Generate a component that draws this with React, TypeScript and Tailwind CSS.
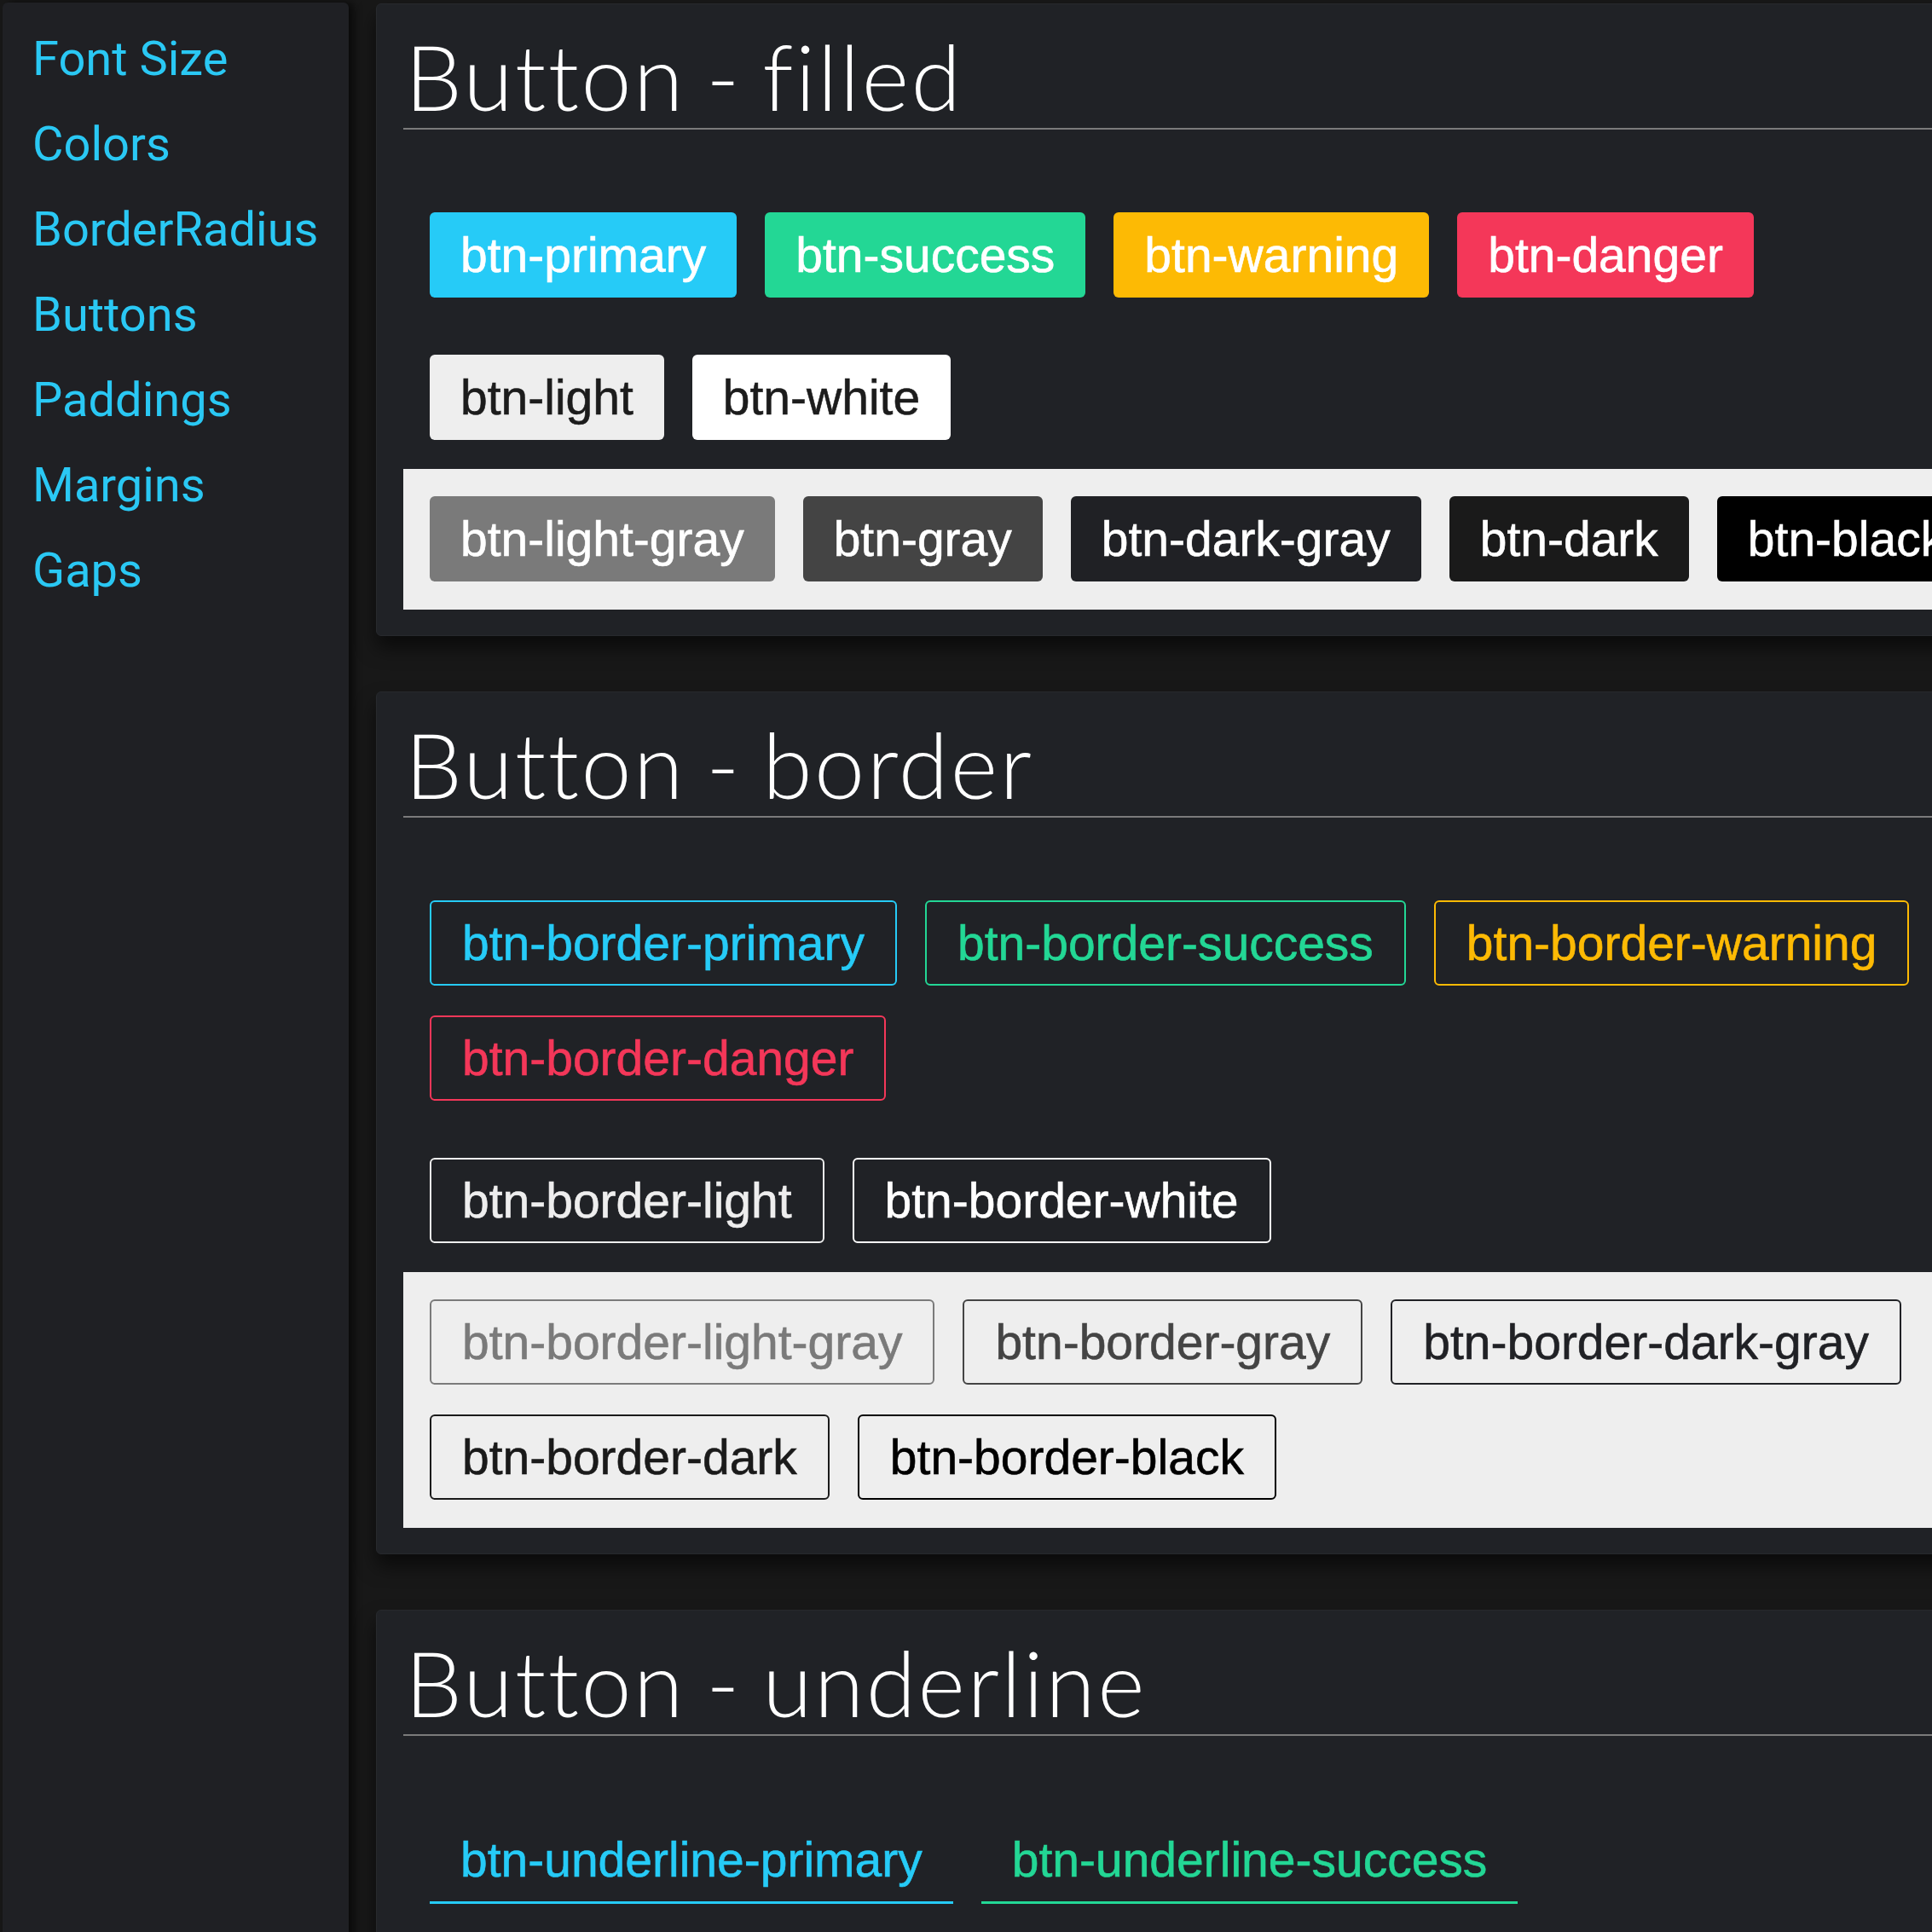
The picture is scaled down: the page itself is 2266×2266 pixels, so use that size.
import React from 'react';

type Btn = { label: string; cls: string };

const navItems = ['Font Size', 'Colors', 'BorderRadius', 'Buttons', 'Paddings', 'Margins', 'Gaps'];

// filled
const filledColors: Btn[] = [
  { label: 'btn-primary', cls: 'bg-[#26cbf7] text-white' },
  { label: 'btn-success', cls: 'bg-[#23d795] text-white' },
  { label: 'btn-warning', cls: 'bg-[#fdba04] text-white' },
  { label: 'btn-danger', cls: 'bg-[#f43759] text-white' },
];
const filledLight: Btn[] = [
  { label: 'btn-light', cls: 'bg-[#eeeeee] text-[#1c1c1c]' },
  { label: 'btn-white', cls: 'bg-white text-[#1c1c1c]' },
];
const filledDark: Btn[] = [
  { label: 'btn-light-gray', cls: 'bg-[#7a7a7a] text-white' },
  { label: 'btn-gray', cls: 'bg-[#444444] text-white' },
  { label: 'btn-dark-gray', cls: 'bg-[#202125] text-white' },
  { label: 'btn-dark', cls: 'bg-[#1a1a1a] text-white' },
  { label: 'btn-black', cls: 'bg-black text-white' },
];

// border
const borderColors: Btn[] = [
  { label: 'btn-border-primary', cls: 'border-[#26cbf7] text-[#26cbf7]' },
  { label: 'btn-border-success', cls: 'border-[#23d795] text-[#23d795]' },
  { label: 'btn-border-warning', cls: 'border-[#fdba04] text-[#fdba04]' },
  { label: 'btn-border-danger', cls: 'border-[#f43759] text-[#f43759]' },
];
const borderLight: Btn[] = [
  { label: 'btn-border-light', cls: 'border-[#eeeeee] text-[#eeeeee]' },
  { label: 'btn-border-white', cls: 'border-white text-white' },
];
const borderDark: Btn[] = [
  { label: 'btn-border-light-gray', cls: 'border-[#7a7a7a] text-[#7a7a7a]' },
  { label: 'btn-border-gray', cls: 'border-[#444444] text-[#444444]' },
  { label: 'btn-border-dark-gray', cls: 'border-[#202125] text-[#202125]' },
  { label: 'btn-border-dark', cls: 'border-[#1a1a1a] text-[#1a1a1a]' },
  { label: 'btn-border-black', cls: 'border-black text-black' },
];

// underline
const underlineColors: Btn[] = [
  { label: 'btn-underline-primary', cls: 'border-[#26cbf7] text-[#26cbf7]' },
  { label: 'btn-underline-success', cls: 'border-[#23d795] text-[#23d795]' },
];

const btnBase =
  "h-[100px] px-[36px] flex items-center whitespace-nowrap text-[57px] leading-none font-['Liberation_Sans',Arial,sans-serif] [-webkit-text-stroke:0.6px_currentColor]";

function Group({ items, variant, band }: { items: Btn[]; variant: 'filled' | 'border' | 'underline'; band?: boolean }) {
  const shape =
    variant === 'filled'
      ? 'rounded-[6px]'
      : variant === 'border'
      ? 'rounded-[6px] border-2 bg-transparent'
      : 'border-b-[3px] bg-transparent';
  return (
    <div
      className={`flex flex-wrap gap-x-[33px] gap-y-[35px] px-[31px] ${
        band ? 'bg-[#eeeeee] pt-[32px] pb-[33px]' : 'py-[33px]'
      }`}
    >
      {items.map(b => (
        <button key={b.label} className={`${btnBase} ${shape} ${b.cls}`}>
          {b.label}
        </button>
      ))}
    </div>
  );
}

function Panel({ title, children }: { title: string; children: React.ReactNode }) {
  return (
    <section className="bg-[#202226] border border-[#27292d] rounded-[6px] shadow-[0_14px_22px_rgba(0,0,0,0.55)] px-[31px] pt-[31px] pb-[30px]">
      <div className="border-b-2 border-[#7b7b7b] pb-[8px]">
        <h2 className="text-[106px] leading-none font-light tracking-[2.5px] [word-spacing:-7px] text-white pl-[2px] font-['Lato','Open_Sans',sans-serif]">
          {title}
        </h2>
      </div>
      <div className="mt-[64px] flex flex-col gap-[1px]">{children}</div>
    </section>
  );
}

export default function App() {
  return (
    <div className="w-[2266px] h-[2266px] overflow-hidden bg-[#181818] flex items-start">
      <aside className="flex-none w-[406px] h-[2300px] ml-[3px] mt-[3px] bg-[#1f2024] rounded-[6px] shadow-[6px_0_10px_rgba(0,0,0,0.6)] pt-[16px] pl-[35px]">
        <nav className="flex flex-col">
          {navItems.map(item => (
            <a
              key={item}
              className="h-[100px] flex items-center text-[56px] leading-none text-[#2ac8f4] font-['Roboto','Liberation_Sans',sans-serif] cursor-pointer"
            >
              {item}
            </a>
          ))}
        </nav>
      </aside>

      <main className="flex-none w-[2030px] ml-[32px] mt-[4px] flex flex-col gap-[65px]">
        <Panel title="Button - filled">
          <Group items={filledColors} variant="filled" />
          <Group items={filledLight} variant="filled" />
          <Group items={filledDark} variant="filled" band />
        </Panel>

        <Panel title="Button - border">
          <Group items={borderColors} variant="border" />
          <Group items={borderLight} variant="border" />
          <Group items={borderDark} variant="border" band />
        </Panel>

        <Panel title="Button - underline">
          <Group items={underlineColors} variant="underline" />
        </Panel>
      </main>
    </div>
  );
}
